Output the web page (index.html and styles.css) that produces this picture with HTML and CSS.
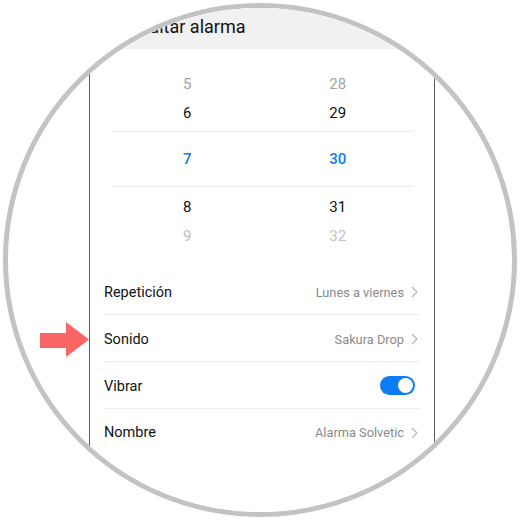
FILE: index.html
```html
<!DOCTYPE html>
<html lang="es">
<head>
<meta charset="utf-8">
<title>Editar alarma</title>
<link rel="stylesheet" href="styles.css">
</head>
<body>
<div class="stage">
  <div class="lens">
    <div class="phone">
      <div class="header"><span class="title">Editar alarma</span></div>
      <div class="picker">
        <div class="prow"><span class="num faded">5</span><span class="num faded">28</span></div>
        <div class="prow"><span class="num">6</span><span class="num">29</span></div>
        <div class="prow selected"><span class="num">7</span><span class="num">30</span></div>
        <div class="prow"><span class="num">8</span><span class="num">31</span></div>
        <div class="prow"><span class="num fainter">9</span><span class="num fainter">32</span></div>
      </div>
      <div class="list">
        <div class="row">
          <span class="label">Repetición</span>
          <span class="value">Lunes a viernes<svg class="chev" width="7" height="12" viewBox="0 0 7 12"><polyline points="1,1 6,6 1,11" fill="none" stroke="#b4b4b4" stroke-width="1.1"/></svg></span>
        </div>
        <div class="row">
          <span class="label">Sonido</span>
          <span class="value">Sakura Drop<svg class="chev" width="7" height="12" viewBox="0 0 7 12"><polyline points="1,1 6,6 1,11" fill="none" stroke="#b4b4b4" stroke-width="1.1"/></svg></span>
        </div>
        <div class="row">
          <span class="label">Vibrar</span>
          <span class="toggle"><span class="knob"></span></span>
        </div>
        <div class="row last">
          <span class="label">Nombre</span>
          <span class="value">Alarma Solvetic<svg class="chev" width="7" height="12" viewBox="0 0 7 12"><polyline points="1,1 6,6 1,11" fill="none" stroke="#b4b4b4" stroke-width="1.1"/></svg></span>
        </div>
      </div>
    </div>
  </div>
  <svg class="arrow" width="50" height="36" viewBox="0 0 50 36">
    <polygon points="0,11 26,11 26,0 49,17.5 26,35 26,26 0,26" fill="#fa6565"/>
  </svg>
</div>
</body>
</html>
```
FILE: styles.css
```css
* { box-sizing: border-box; }
html, body { margin: 0; padding: 0; background: #fff; }
body { font-family: Roboto, "Noto Sans", Arial, sans-serif; color: #111; }

.stage {
  position: relative;
  width: 520px;
  height: 520px;
  padding: 3px;
}

.lens {
  width: 514px;
  height: 514px;
  border: 5px solid #c3c3c3;
  border-radius: 50%;
  overflow: hidden;
  background: #fff;
}

.phone {
  margin-left: 81px;
  width: 346px;
  height: 504px;
  border-left: 1px solid #585858;
  border-right: 1px solid #585858;
  background: #fff;
}

.header {
  height: 41px;
  background: #f1f1f1;
  padding: 9px 0 0 49px;
}
.title {
  font-size: 18px;
  line-height: 20px;
  color: #111;
}

.picker {
  padding: 21px 21px 17px 22px;
}
.prow {
  display: grid;
  grid-template-columns: 1fr 1fr;
  height: 29px;
  line-height: 29px;
  text-align: center;
  font-size: 15px;
}
.prow.selected {
  height: 56px;
  line-height: 55px;
  margin: 3px 0 6px;
  border-top: 1px solid #ececec;
  border-bottom: 1px solid #ececec;
  color: #0a7cf6;
  font-weight: 500;
}
.num.faded { color: #a4a4a4; }
.num.fainter { color: #c2c2c2; }

.list { padding: 0 14px; }
.row {
  display: flex;
  align-items: center;
  justify-content: space-between;
  height: 47px;
  padding-top: 2px;
  border-bottom: 1px solid #ebebeb;
}
.row.last { border-bottom: none; padding-top: 0; }
.label {
  font-size: 14.5px;
  color: #111;
}
.value {
  display: flex;
  align-items: center;
  gap: 7px;
  font-size: 12.8px;
  color: #8a8a8a;
  margin-right: 2px;
}
.chev { display: block; }

.toggle {
  display: flex;
  justify-content: flex-end;
  align-items: center;
  width: 35px;
  height: 19px;
  padding: 2px;
  margin: -2px 5px 0 0;
  border-radius: 10px;
  background: #0a7cf6;
}
.knob {
  width: 15px;
  height: 15px;
  border-radius: 50%;
  background: #fff;
}

.arrow {
  position: absolute;
  left: 40px;
  top: 322px;
}
```
